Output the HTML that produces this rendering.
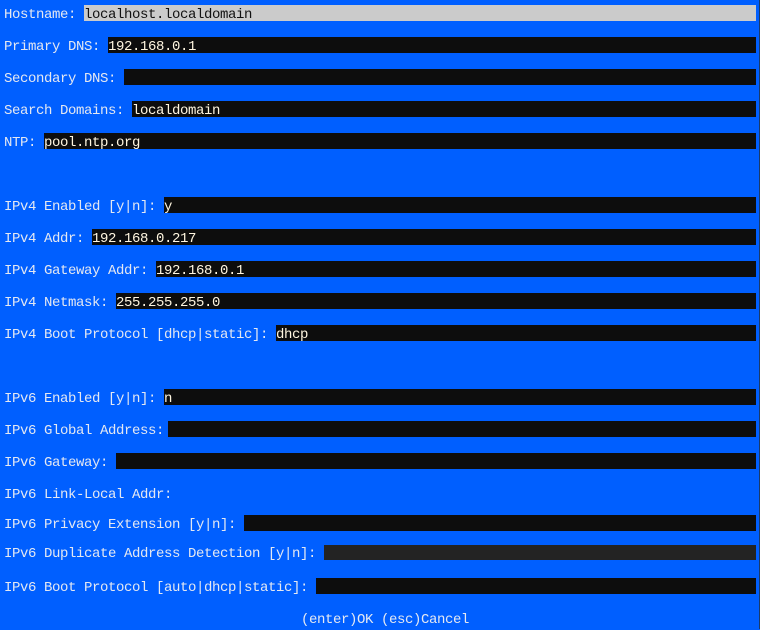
<!DOCTYPE html>
<html><head><meta charset="utf-8"><style>
html,body{margin:0;padding:0}
body{width:760px;height:629px;background:#005fff;position:relative;overflow:hidden;font-family:"Liberation Mono",monospace;font-size:14px;letter-spacing:-0.4px;border-right:1px solid #1a3a6a;box-sizing:border-box}
.r{position:absolute;left:4px;height:16px;line-height:20px;color:#e4e8f2;white-space:pre}
.f{position:absolute;right:3px;height:16px;line-height:20px;background:#0d0d0d;color:#fff6e0;white-space:pre;overflow:hidden}
</style></head><body>
<div class="r" style="top:5px">Hostname: </div><div class="f" style="top:5px;left:84px;background:#cbcbcb;color:#111">localhost.localdomain</div>
<div class="r" style="top:37px">Primary DNS: </div><div class="f" style="top:37px;left:108px">192.168.0.1</div>
<div class="r" style="top:69px">Secondary DNS: </div><div class="f" style="top:69px;left:124px"></div>
<div class="r" style="top:101px">Search Domains: </div><div class="f" style="top:101px;left:132px">localdomain</div>
<div class="r" style="top:133px">NTP: </div><div class="f" style="top:133px;left:44px">pool.ntp.org</div>
<div class="r" style="top:197px">IPv4 Enabled [y|n]: </div><div class="f" style="top:197px;left:164px">y</div>
<div class="r" style="top:229px">IPv4 Addr: </div><div class="f" style="top:229px;left:92px">192.168.0.217</div>
<div class="r" style="top:261px">IPv4 Gateway Addr: </div><div class="f" style="top:261px;left:156px">192.168.0.1</div>
<div class="r" style="top:293px">IPv4 Netmask: </div><div class="f" style="top:293px;left:116px">255.255.255.0</div>
<div class="r" style="top:325px">IPv4 Boot Protocol [dhcp|static]: </div><div class="f" style="top:325px;left:276px">dhcp</div>
<div class="r" style="top:389px">IPv6 Enabled [y|n]: </div><div class="f" style="top:389px;left:164px">n</div>
<div class="r" style="top:421px">IPv6 Global Address: </div><div class="f" style="top:421px;left:168px"></div>
<div class="r" style="top:453px">IPv6 Gateway: </div><div class="f" style="top:453px;left:116px"></div>
<div class="r" style="top:485px">IPv6 Link-Local Addr:</div>
<div class="r" style="top:515px">IPv6 Privacy Extension [y|n]: </div><div class="f" style="top:515px;left:244px"></div>
<div class="r" style="top:544px">IPv6 Duplicate Address Detection [y|n]: </div><div class="f" style="top:545px;left:324px;height:15px;background:#232323"></div>
<div class="r" style="top:578px">IPv6 Boot Protocol [auto|dhcp|static]: </div><div class="f" style="top:578px;left:316px"></div>
<div class="r" style="top:610px;left:301px">(enter)OK (esc)Cancel</div>
</body></html>
